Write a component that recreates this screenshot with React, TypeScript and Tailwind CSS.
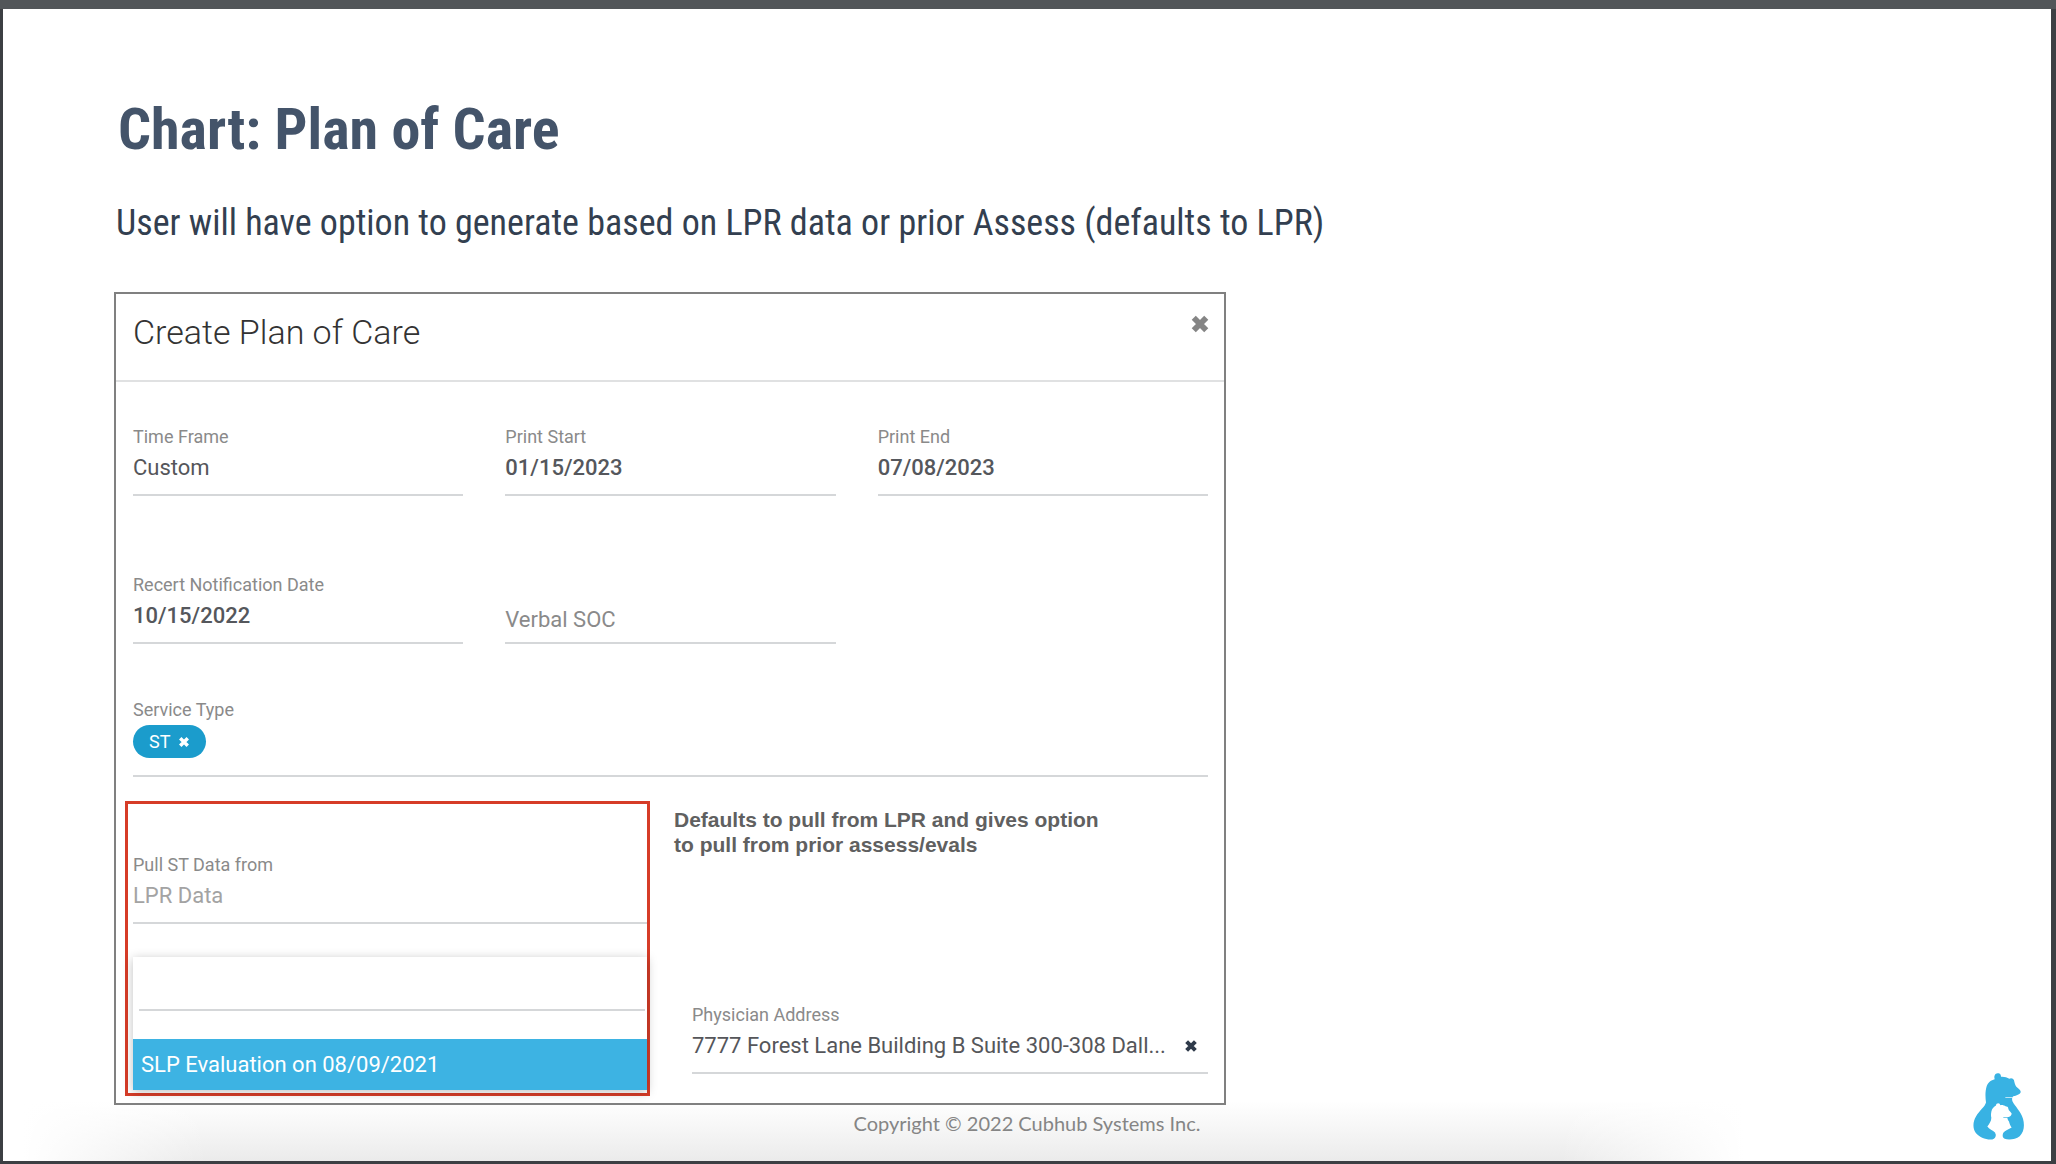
import React from "react";

const labelClass = "block text-[18px] leading-[22px] text-[#8a8a8a]";
const inputClass =
  "block w-full border-b-2 border-[#d5d7d9] bg-transparent text-[22px] leading-[28px] outline-none";

type FieldProps = {
  id: string;
  label: string;
  value: string;
  strong?: boolean;
};

const Field = ({ id, label, value, strong }: FieldProps) => (
  <div>
    <label htmlFor={id} className={labelClass}>
      {label}
    </label>
    <input
      id={id}
      type="text"
      defaultValue={value}
      className={`${inputClass} mt-1.5 pb-3 ${strong ? "font-medium text-[#55575c]" : "text-[#55565a]"}`}
    />
  </div>
);

const CloseMark = ({ className }: { className: string }) => (
  <svg viewBox="0 0 16 16" className={className} aria-hidden="true">
    <path d="M3 3L13 13M13 3L3 13" stroke="currentColor" strokeWidth="4.6" fill="none" />
  </svg>
);

const BearLogo = () => (
  <svg viewBox="100 66 156 206" className="h-[69px] w-[52px]" role="img" aria-label="Cubhub">
    <path
      fill="#38b2e3"
      d="M164 79C165 70 173 67 179 70C183 72 184 76 184 80C193 79 202 82 209 86C213 82 221 84 223 90C224 96 226 104 230 110C236 116 244 120 243 126C241 132 230 136 221 138C217 141 216 148 219 155C226 168 243 184 250 206C255 224 254 246 240 258C228 268 207 270 195 266C187 262 187 252 190 246L168 248C170 256 167 266 158 268C140 270 119 262 108 248C98 234 100 213 109 199C119 181 136 170 139 157C137 143 136 124 141 108C146 95 154 90 165 87C164 84 164 82 164 79Z"
    />
    <path
      fill="#fff"
      d="M169 166C169 160 176 157 180 161L182 165C188 164 194 166 199 169C204 168 206 171 206 176C207 182 214 186 216 190C216 196 211 200 204 201C202 204 204 208 208 214C210 221 212 227 216 232C207 237 196 241 191 248C187 254 187 262 191 272H166C170 264 171 254 166 247C160 241 148 237 143 229C149 221 155 213 155 203C153 196 154 186 157 178C160 172 164 169 169 166Z"
    />
    <path d="M197 142H219" stroke="#fff" strokeWidth="2" />
    <path d="M191 202H205" stroke="#38b2e3" strokeWidth="2" />
  </svg>
);

const App = () => {
  return (
    <div className="flex min-h-screen flex-col bg-[#3c3f43] pr-[5px] pb-[3px] pl-[3px] font-[Roboto,sans-serif]">
      <div className="-mr-[5px] -ml-[3px] h-[9px] bg-[#525659]" />

      <main className="relative flex flex-1 flex-col bg-white bg-[linear-gradient(to_right,#fff_1%,#fff0_10%,#fff0_76%,#fff_85%),linear-gradient(to_top,#ebebeb,#fff_60px)] px-[111px] pt-[82px]">
        <h1 className="pl-1 font-['Arial_Narrow','Liberation_Sans_Narrow','Roboto_Condensed',sans-serif] text-[58px] leading-[76px] font-bold text-[#44546a]">
          Chart: Plan of Care
        </h1>
        <p className="mt-[32px] pl-0.5 font-['Arial_Narrow','Liberation_Sans_Narrow','Roboto_Condensed',sans-serif] text-[36px] leading-[48px] text-[#333f50]">
          User will have option to generate based on LPR data or prior Assess (defaults to LPR)
        </p>

        {/* Dialog */}
        <section className="mt-[45px] w-full max-w-[1112px] border-2 border-[#808080] bg-white">
          <header className="flex items-start justify-between border-b-2 border-[#e0e1e2] pt-4 pr-[14px] pb-[26px] pl-[17px]">
            <h2 className="text-[34px] leading-[44px] font-light text-[#333333]">Create Plan of Care</h2>
            <button type="button" aria-label="Close" className="mt-1 text-[#858585]">
              <CloseMark className="h-[20px] w-[20px]" />
            </button>
          </header>

          <div className="grid grid-cols-3 gap-x-[42px] gap-y-[78px] pt-[44px] pr-4 pl-[17px]">
            <Field id="time-frame" label="Time Frame" value="Custom" />
            <Field id="print-start" label="Print Start" value="01/15/2023" strong />
            <Field id="print-end" label="Print End" value="07/08/2023" strong />
            <Field id="recert" label="Recert Notification Date" value="10/15/2022" strong />
            <div className="flex flex-col justify-end">
              <input
                type="text"
                aria-label="Verbal SOC"
                placeholder="Verbal SOC"
                className={`${inputClass} pb-2 placeholder:text-[#8a8a8a] placeholder:opacity-100`}
              />
            </div>
          </div>

          <div className="mt-[55px] mr-4 ml-[17px] border-b-2 border-[#d5d7d9] pb-[17px]">
            <span className={labelClass}>Service Type</span>
            <button
              type="button"
              className="mt-1 flex h-[33px] items-center gap-2 rounded-full bg-[#1b9ccc] px-4 text-[18px] text-white"
            >
              ST
              <CloseMark className="h-[12px] w-[12px]" />
            </button>
          </div>

          <div className="flex items-stretch pt-[24px] pr-4 pb-[7px] pl-[9px]">
            <div className="w-[525px] shrink-0 border-3 border-[#d63c28] pt-[50px] pb-[3px] pl-[5px]">
              <label htmlFor="pull-data" className={labelClass}>
                Pull ST Data from
              </label>
              <input
                id="pull-data"
                type="text"
                placeholder="LPR Data"
                className={`${inputClass} mt-1.5 pb-3 placeholder:text-[#a3a3a3] placeholder:opacity-100`}
              />
              <div className="mt-[33px] shadow-[0_2px_10px_rgba(0,0,0,0.25)]">
                <div className="h-[82px] pt-[10px] pr-0.5 pl-[6px]">
                  <input type="text" aria-label="Search" className={`${inputClass} h-[44px]`} />
                </div>
                <button
                  type="button"
                  className="block h-[51px] w-full bg-[#3db3e3] px-2 text-left text-[22px] text-white"
                >
                  SLP Evaluation on 08/09/2021
                </button>
              </div>
            </div>

            <div className="flex flex-1 flex-col justify-between pb-[22px] pl-[24px]">
              <p className="pt-[6px] font-['Liberation_Sans',sans-serif] text-[21px] leading-[25px] font-bold text-[#606060]">
                Defaults to pull from LPR and gives option
                <br />
                to pull from prior assess/evals
              </p>
              <div className="ml-[18px]">
                <label htmlFor="address" className={labelClass}>
                  Physician Address
                </label>
                <div className="mt-1.5 flex items-center justify-between border-b-2 border-[#d5d7d9] pr-[10px] pb-3">
                  <input
                    id="address"
                    type="text"
                    defaultValue="7777 Forest Lane Building B Suite 300-308 Dall..."
                    className="flex-1 bg-transparent text-[22px] leading-[28px] text-[#55565a] outline-none"
                  />
                  <button type="button" aria-label="Clear address" className="text-[#2f3a4a]">
                    <CloseMark className="h-[14px] w-[14px]" />
                  </button>
                </div>
              </div>
            </div>
          </div>
        </section>

        <footer className="pt-[3px] text-center font-[Lato,sans-serif] text-[20px] leading-[30px] text-[#858585]">
          Copyright © 2022 Cubhub Systems Inc.
        </footer>
        <div className="absolute right-[26px] bottom-[20px]">
          <BearLogo />
        </div>
      </main>
    </div>
  );
};

export default App;
